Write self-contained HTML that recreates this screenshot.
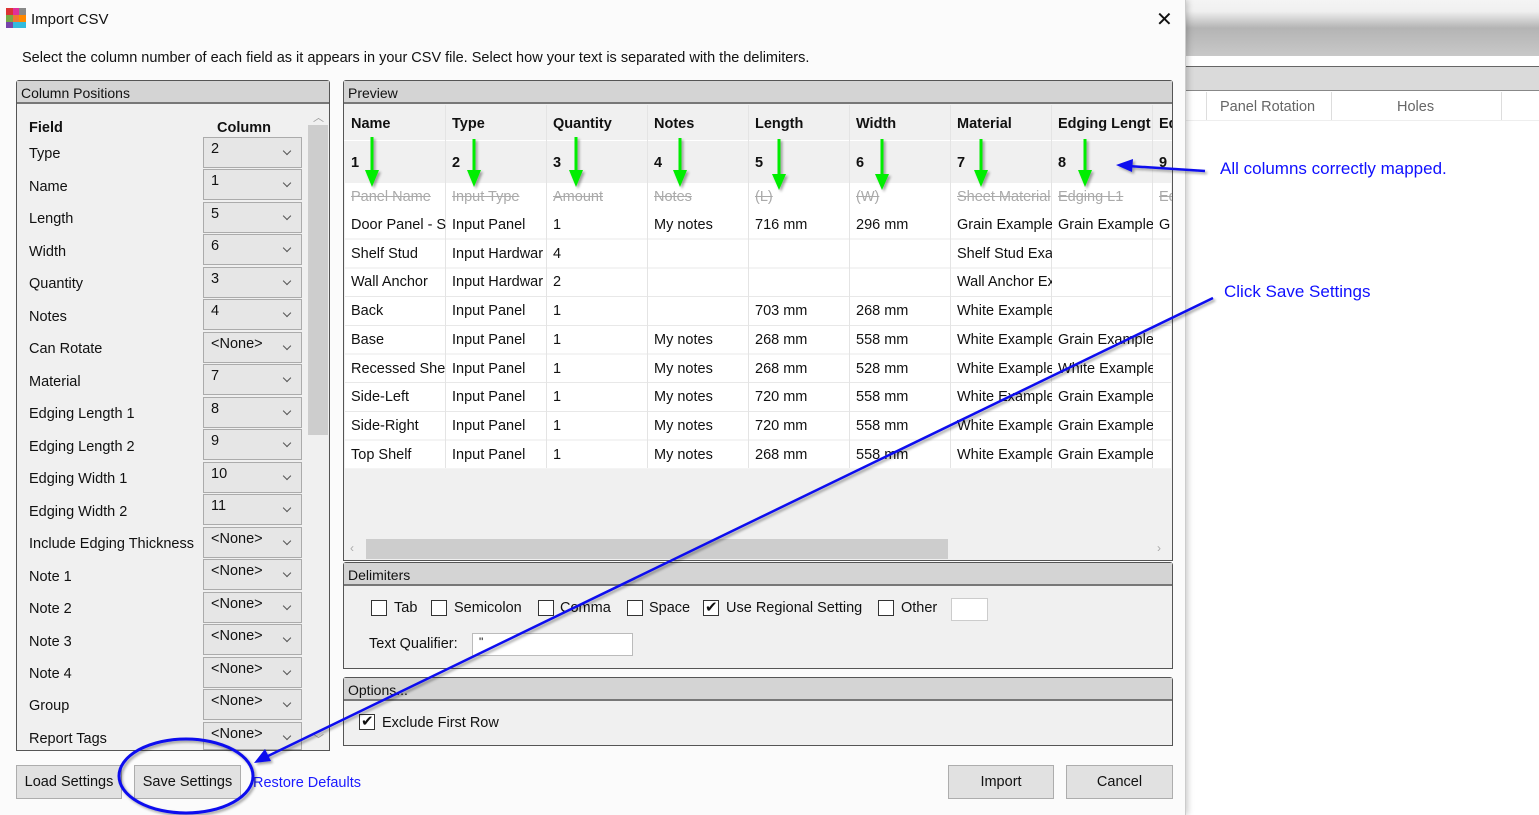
<!DOCTYPE html>
<html><head><meta charset="utf-8"><style>
*{margin:0;padding:0;box-sizing:border-box}
body{width:1539px;height:815px;position:relative;overflow:hidden;background:#fff;font-family:"Liberation Sans",sans-serif;font-size:14.5px;color:#111}
.a{position:absolute;white-space:nowrap}
.panel{position:absolute;border:1px solid #555;background:#f0f0f0;border-radius:3px 3px 0 0}
.ph{position:absolute;left:0;right:0;top:0;height:23px;background:#d4d4d4;border-bottom:2px solid #777;padding:4px 4px;font-size:14px}
.combo{position:absolute;left:203px;width:99px;height:31px;background:#e6e6e6;border:1px solid #ababab;padding:3px 7px;font-size:14.5px}
.combo:after{content:"";position:absolute;right:11px;top:10px;width:5px;height:5px;border-right:1px solid #555;border-bottom:1px solid #555;transform:rotate(45deg)}
.fl{position:absolute;left:29px;font-size:14.5px}
.cell{position:absolute;width:101px;overflow:hidden;padding-left:6px;font-size:14.5px}
.st{text-decoration:line-through;color:#aaa}
.cb{position:absolute;width:16px;height:16px;border:1px solid #333;background:#fff}
.btn{position:absolute;height:34px;background:#e1e1e1;border:1px solid #adadad;text-align:center;line-height:32px;font-size:14.5px}
.vl{position:absolute;top:105px;width:1px;height:363px;background:#e4e4e4}
</style></head><body>
<!-- right background app -->
<div class="a" style="left:1185px;top:0;width:354px;height:56px;background:linear-gradient(#f4f4f4,#f0f0f0 20%,#b4b4b4 50%,#c8c8c8)"></div>
<div class="a" style="left:1185px;top:66px;width:354px;height:25px;background:#dadada;border-top:1px solid #666;border-bottom:1px solid #888"></div>
<div class="a" style="left:1206px;top:92px;width:1px;height:28px;background:#ddd"></div>
<div class="a" style="left:1331px;top:92px;width:1px;height:28px;background:#ddd"></div>
<div class="a" style="left:1501px;top:92px;width:1px;height:28px;background:#ddd"></div>
<div class="a" style="left:1185px;top:120px;width:354px;height:1px;background:#eee"></div>
<div class="a" style="left:1220px;top:99px;color:#666;font-size:14.5px">Panel Rotation</div>
<div class="a" style="left:1397px;top:99px;color:#666;font-size:14.5px">Holes</div>
<div class="a" style="left:1220px;top:159px;color:#1010ff;font-size:17px">All columns correctly mapped.</div>
<div class="a" style="left:1224px;top:282px;color:#1010ff;font-size:17px">Click Save Settings</div>

<!-- dialog -->
<div class="a" style="left:0;top:0;width:1186px;height:815px;background:#fbfbfb;border-right:1px solid #ccc;box-shadow:2px 0 6px rgba(0,0,0,.2)"></div>
<svg class="a" style="left:6px;top:8px" width="20" height="20"><rect x="0" y="0" width="7" height="7" fill="#d33"/><rect x="7" y="0" width="6" height="7" fill="#e0309a"/><rect x="13" y="0" width="7" height="7" fill="#888"/><rect x="0" y="7" width="7" height="7" fill="#7a4"/><rect x="7" y="7" width="6" height="7" fill="#e73"/><rect x="13" y="7" width="7" height="7" fill="#f80"/><rect x="0" y="14" width="7" height="6" fill="#74a"/><rect x="7" y="14" width="13" height="6" fill="#3bd"/></svg>
<div class="a" style="left:31px;top:11px;font-size:15px">Import CSV</div>
<div class="a" style="left:1156px;top:7px;font-size:20px;font-weight:300">✕</div>
<div class="a" style="left:22px;top:50px;font-size:14.5px">Select the column number of each field as it appears in your CSV file. Select how your text is separated with the delimiters.</div>

<!-- Column positions -->
<div class="panel" style="left:16px;top:80px;width:314px;height:671px">
<div class="ph">Column Positions</div>
<div class="a" style="left:291px;top:44px;width:20px;height:310px;background:#cdcdcd"></div>
<div class="a" style="left:296px;top:28px;font-size:11px;color:#999">︿</div>
<div class="a" style="left:296px;top:650px;font-size:11px;color:#999">﹀</div>
</div>
<div class="a" style="left:29px;top:120px;font-weight:bold">Field</div>
<div class="a" style="left:217px;top:120px;font-weight:bold">Column</div>
<div class="fl" style="top:146px">Type</div><div class="combo" style="top:137px">2</div>
<div class="fl" style="top:179px">Name</div><div class="combo" style="top:169px">1</div>
<div class="fl" style="top:211px">Length</div><div class="combo" style="top:202px">5</div>
<div class="fl" style="top:244px">Width</div><div class="combo" style="top:234px">6</div>
<div class="fl" style="top:276px">Quantity</div><div class="combo" style="top:267px">3</div>
<div class="fl" style="top:309px">Notes</div><div class="combo" style="top:299px">4</div>
<div class="fl" style="top:341px">Can Rotate</div><div class="combo" style="top:332px">&lt;None&gt;</div>
<div class="fl" style="top:374px">Material</div><div class="combo" style="top:364px">7</div>
<div class="fl" style="top:406px">Edging Length 1</div><div class="combo" style="top:397px">8</div>
<div class="fl" style="top:439px">Edging Length 2</div><div class="combo" style="top:429px">9</div>
<div class="fl" style="top:471px">Edging Width 1</div><div class="combo" style="top:462px">10</div>
<div class="fl" style="top:504px">Edging Width 2</div><div class="combo" style="top:494px">11</div>
<div class="fl" style="top:536px">Include Edging Thickness</div><div class="combo" style="top:527px">&lt;None&gt;</div>
<div class="fl" style="top:569px">Note 1</div><div class="combo" style="top:559px">&lt;None&gt;</div>
<div class="fl" style="top:601px">Note 2</div><div class="combo" style="top:592px">&lt;None&gt;</div>
<div class="fl" style="top:634px">Note 3</div><div class="combo" style="top:624px">&lt;None&gt;</div>
<div class="fl" style="top:666px">Note 4</div><div class="combo" style="top:657px">&lt;None&gt;</div>
<div class="fl" style="top:698px">Group</div><div class="combo" style="top:689px">&lt;None&gt;</div>
<div class="fl" style="top:731px">Report Tags</div><div class="combo" style="top:722px;height:28px">&lt;None&gt;</div>

<!-- Preview -->
<div class="panel" style="left:343px;top:80px;width:830px;height:481px">
<div class="ph">Preview</div>
<div class="a" style="left:1px;top:25px;width:826px;height:363px;background:#fff"></div>
<div class="a" style="left:1px;top:25px;width:826px;height:77px;background:#f0f0f0"></div>
<div class="a" style="left:1px;top:130px;width:826px;height:258px;background:repeating-linear-gradient(#fff 0 27.7px,#e8e8e8 27.7px 28.7px)"></div>
<div class="a" style="left:22px;top:458px;width:582px;height:20px;background:#cdcdcd"></div>
<div class="a" style="left:6px;top:460px;font-size:12px;color:#aaa">‹</div>
<div class="a" style="left:813px;top:460px;font-size:12px;color:#aaa">›</div>
</div>
<div class="a" style="left:344px;top:140px;width:828px;height:1px;background:#fff"></div>
<div class="vl" style="left:445px"></div><div class="vl" style="left:546px"></div><div class="vl" style="left:647px"></div><div class="vl" style="left:748px"></div><div class="vl" style="left:849px"></div><div class="vl" style="left:950px"></div><div class="vl" style="left:1051px"></div><div class="vl" style="left:1152px"></div>
<div class="a" style="left:345px;top:105px;width:827px;height:364px;overflow:hidden">
<div class="a" style="left:0;top:0;font-weight:bold;line-height:1">
<div class="cell" style="left:0;top:12px">Name</div><div class="cell" style="left:101px;top:12px">Type</div><div class="cell" style="left:202px;top:12px">Quantity</div><div class="cell" style="left:303px;top:12px">Notes</div><div class="cell" style="left:404px;top:12px">Length</div><div class="cell" style="left:505px;top:12px">Width</div><div class="cell" style="left:606px;top:12px">Material</div><div class="cell" style="left:707px;top:12px">Edging Lengt</div><div class="cell" style="left:808px;top:12px">Ed</div>
<div class="cell" style="left:0;top:51px">1</div><div class="cell" style="left:101px;top:51px">2</div><div class="cell" style="left:202px;top:51px">3</div><div class="cell" style="left:303px;top:51px">4</div><div class="cell" style="left:404px;top:51px">5</div><div class="cell" style="left:505px;top:51px">6</div><div class="cell" style="left:606px;top:51px">7</div><div class="cell" style="left:707px;top:51px">8</div><div class="cell" style="left:808px;top:51px">9</div>
</div>
<div class="a" style="left:0;top:85px;line-height:1.1">
<div class="cell st" style="left:0">Panel Name</div><div class="cell st" style="left:101px">Input Type</div><div class="cell st" style="left:202px">Amount</div><div class="cell st" style="left:303px">Notes</div><div class="cell st" style="left:404px">(L)</div><div class="cell st" style="left:505px">(W)</div><div class="cell st" style="left:606px">Sheet Material</div><div class="cell st" style="left:707px">Edging L1</div><div class="cell st" style="left:808px">Ed</div>
</div>
<div class="a" style="left:0;top:106px;line-height:28.7px">
<div class="cell" style="left:0;top:0">Door Panel - S<br>Shelf Stud<br>Wall Anchor<br>Back<br>Base<br>Recessed Shelf<br>Side-Left<br>Side-Right<br>Top Shelf</div>
<div class="cell" style="left:101px;top:0">Input Panel<br>Input Hardwar<br>Input Hardwar<br>Input Panel<br>Input Panel<br>Input Panel<br>Input Panel<br>Input Panel<br>Input Panel</div>
<div class="cell" style="left:202px;top:0">1<br>4<br>2<br>1<br>1<br>1<br>1<br>1<br>1</div>
<div class="cell" style="left:303px;top:0">My notes<br>&nbsp;<br>&nbsp;<br>&nbsp;<br>My notes<br>My notes<br>My notes<br>My notes<br>My notes</div>
<div class="cell" style="left:404px;top:0">716 mm<br>&nbsp;<br>&nbsp;<br>703 mm<br>268 mm<br>268 mm<br>720 mm<br>720 mm<br>268 mm</div>
<div class="cell" style="left:505px;top:0">296 mm<br>&nbsp;<br>&nbsp;<br>268 mm<br>558 mm<br>528 mm<br>558 mm<br>558 mm<br>558 mm</div>
<div class="cell" style="left:606px;top:0">Grain Example<br>Shelf Stud Exa<br>Wall Anchor Ex<br>White Example<br>White Example<br>White Example<br>White Example<br>White Example<br>White Example</div>
<div class="cell" style="left:707px;top:0">Grain Example<br>&nbsp;<br>&nbsp;<br>&nbsp;<br>Grain Example<br>White Example<br>Grain Example<br>Grain Example<br>Grain Example</div>
<div class="cell" style="left:808px;top:0">G</div>
</div>
</div>

<!-- Delimiters -->
<div class="panel" style="left:343px;top:562px;width:830px;height:107px">
<div class="ph">Delimiters</div>
</div>
<div class="cb" style="left:371px;top:600px"></div><div class="a" style="left:394px;top:600px">Tab</div>
<div class="cb" style="left:431px;top:600px"></div><div class="a" style="left:454px;top:600px">Semicolon</div>
<div class="cb" style="left:538px;top:600px"></div><div class="a" style="left:560px;top:600px">Comma</div>
<div class="cb" style="left:627px;top:600px"></div><div class="a" style="left:649px;top:600px">Space</div>
<div class="cb" style="left:703px;top:600px"></div><div class="a" style="left:705px;top:598px;font-size:15px">✔</div><div class="a" style="left:726px;top:600px">Use Regional Setting</div>
<div class="cb" style="left:878px;top:600px"></div><div class="a" style="left:901px;top:600px">Other</div>
<div class="a" style="left:951px;top:598px;width:37px;height:23px;background:#fff;border:1px solid #ccc"></div>
<div class="a" style="left:369px;top:636px">Text Qualifier:</div>
<div class="a" style="left:472px;top:633px;width:161px;height:23px;background:#fff;border:1px solid #bbb;padding:1px 6px;font-size:12px">"</div>

<!-- Options -->
<div class="panel" style="left:343px;top:677px;width:830px;height:69px">
<div class="ph">Options...</div>
</div>
<div class="cb" style="left:359px;top:714px"></div><div class="a" style="left:361px;top:712px;font-size:15px">✔</div>
<div class="a" style="left:382px;top:715px">Exclude First Row</div>

<!-- Buttons -->
<div class="btn" style="left:16px;top:765px;width:106px">Load Settings</div>
<div class="btn" style="left:134px;top:765px;width:107px">Save Settings</div>
<div class="a" style="left:253px;top:775px;color:#1a1aff">Restore Defaults</div>
<div class="btn" style="left:948px;top:765px;width:106px">Import</div>
<div class="btn" style="left:1066px;top:765px;width:107px">Cancel</div>

<!-- annotations -->
<svg class="a" style="left:0;top:0" width="1539" height="815">
<defs><filter id="sh"><feDropShadow dx="2" dy="2" stdDeviation="1.2" flood-opacity=".35"/></filter></defs>
<g stroke="#00ee00" stroke-width="3" fill="#00ee00" filter="url(#sh)">
<line x1="372" y1="137" x2="372" y2="172"/><polygon points="365,170 379,170 372,187" stroke="none"/>
<line x1="474" y1="139" x2="474" y2="172"/><polygon points="467,170 481,170 474,187" stroke="none"/>
<line x1="576" y1="137" x2="576" y2="172"/><polygon points="569,170 583,170 576,187" stroke="none"/>
<line x1="680" y1="138" x2="680" y2="172"/><polygon points="673,170 687,170 680,187" stroke="none"/>
<line x1="779" y1="139" x2="779" y2="176"/><polygon points="772,174 786,174 779,190" stroke="none"/>
<line x1="882" y1="139" x2="882" y2="176"/><polygon points="875,174 889,174 882,190" stroke="none"/>
<line x1="981" y1="139" x2="981" y2="172"/><polygon points="974,170 988,170 981,187" stroke="none"/>
<line x1="1085" y1="139" x2="1085" y2="172"/><polygon points="1078,170 1092,170 1085,187" stroke="none"/>
</g>
<g stroke="#1010ee" fill="#1010ee" stroke-width="2.5" filter="url(#sh)">
<line x1="1205" y1="171" x2="1128" y2="166"/><polygon points="1116,165 1133,159 1132,172" stroke="none"/>
<line x1="1213" y1="298" x2="268" y2="756"/><polygon points="254,763 265,749 271,761" stroke="none"/>
<ellipse cx="186" cy="776" rx="67" ry="37" fill="none" stroke-width="3"/>
</g>
</svg>
</body></html>
